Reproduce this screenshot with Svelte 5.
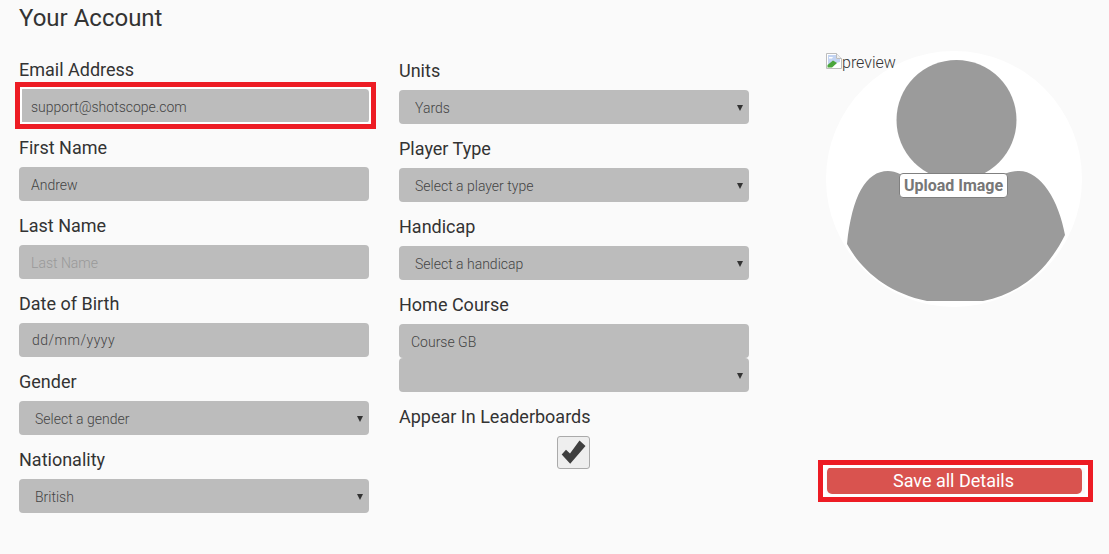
<script>
  const left = [
    { label: 'Email Address', kind: 'input', value: 'support@shotscope.com', marked: true },
    { label: 'First Name', kind: 'input', value: 'Andrew' },
    { label: 'Last Name', kind: 'input', placeholder: 'Last Name' },
    { label: 'Date of Birth', kind: 'input', value: 'dd/mm/yyyy', spaced: true },
    { label: 'Gender', kind: 'select', value: 'Select a gender' },
    { label: 'Nationality', kind: 'select', value: 'British' }
  ];
  const middle = [
    { label: 'Units', kind: 'select', value: 'Yards' },
    { label: 'Player Type', kind: 'select', value: 'Select a player type' },
    { label: 'Handicap', kind: 'select', value: 'Select a handicap' }
  ];
</script>

{#snippet field(f)}
  <div class="field">
    <span class="label">{f.label}</span>
    {#if f.kind === 'input'}
      <div class:marked={f.marked} class="control-wrap">
        <input class="control" class:spaced={f.spaced} type="text" value={f.value ?? ''} placeholder={f.placeholder ?? ''} />
      </div>
    {:else}
      <div class="select-wrap">
        <select class="control select"><option>{f.value}</option></select>
      </div>
    {/if}
  </div>
{/snippet}

<main class="page">
  <h1>Your Account</h1>
  <div class="columns">
    <section class="col">
      {#each left as f}{@render field(f)}{/each}
    </section>

    <section class="col col-mid">
      {#each middle as f}{@render field(f)}{/each}
      <div class="field">
        <span class="label">Home Course</span>
        <input class="control" type="text" value="Course GB" />
        <div class="select-wrap"><select class="control select"><option></option></select></div>
      </div>
      <div class="field check-field">
        <span class="label">Appear In Leaderboards</span>
        <div class="check-row">
          <span class="check">
            <svg viewBox="0 0 31 31" width="31" height="31" aria-hidden="true">
              <path d="M3.700 17.500 L8 12.700 L12 16.500 L21.500 3.500 L27.500 9 L12.200 26.800 Z" fill="#3f3f3f" />
            </svg>
          </span>
        </div>
      </div>
    </section>

    <aside class="col-side">
      <div class="avatar">
        <svg class="person" viewBox="0 0 256 256" width="256" height="256" aria-hidden="true">
          <circle cx="128" cy="128" r="128" fill="#fff" />
          <circle cx="130.500" cy="69" r="60" fill="#9b9b9b" />
          <path d="M74 123 C70 121 66 120 62 120 C40 120 26 145 21 193 C36 220 62 242 101 250 L157 250 C196 242 222 218 239 184 C233 150 215 120 193 120 C188 120 184 121 181 122 L128 135 Z" fill="#9b9b9b" />
        </svg>
        <span class="broken">
          <svg viewBox="0 0 16 16" width="16" height="16" aria-hidden="true">
            <path d="M0.5 0.5 H10.5 L15.5 5.500 V15.5 H0.5 Z" fill="#fff" stroke="#bdbdbd" />
            <path d="M10.5 0.5 V5.500 H15.5" fill="#eee" stroke="#bdbdbd" />
            <path d="M2 2 H10 V6 H14 V9 L2 12 Z" fill="#c3d4f2" />
            <path d="M1.500 14.500 V12 L7 7.500 L11 10 L6 14.500 Z" fill="#4aa63c" />
            <path d="M3 4 h4 l-1 1.500 h-3 Z" fill="#fff" />
          </svg>preview</span>
        <button class="upload" type="button">Upload Image</button>
      </div>
      <div class="save-wrap">
        <button class="save" type="button">Save all Details</button>
      </div>
    </aside>
  </div>
</main>

<style>
  :global(body) {
    margin: 0;
    background: #fafafa;
  }
  .page {
    height: 554px;
    box-sizing: border-box;
    padding-left: 19px;
    font-family: Roboto, "Liberation Sans", sans-serif;
    color: #333;
    overflow: hidden;
  }
  h1 {
    margin: 0 0 23px;
    font-size: 24px;
    font-weight: 400;
    line-height: 36px;
  }
  .columns {
    display: grid;
    grid-template-columns: 350px 350px 256px;
    column-gap: 30px;
  }
  .col-mid {
    margin-top: 1px;
  }
  .field {
    display: flex;
    flex-direction: column;
    margin-bottom: 14px;
  }
  .label {
    font-size: 18px;
    line-height: 20px;
    padding-top: 1px;
    margin-bottom: 9px;
  }
  .control-wrap,
  .select-wrap {
    position: relative;
    height: 34px;
  }
  .control {
    display: block;
    box-sizing: border-box;
    width: 350px;
    height: 34px;
    padding: 2px 12px 0;
    border: 0;
    border-radius: 4px;
    background: #bcbcbc;
    color: #444;
    font: 300 14px Roboto, "Liberation Sans", sans-serif;
    outline: none;
  }
  .spaced {
    padding: 0 12px 0 13px;
    letter-spacing: 0.5px;
  }
  .control::placeholder {
    color: #999;
    opacity: 1;
  }
  .select {
    appearance: none;
    padding: 2px 16px 0;
  }
  .select-wrap::after {
    content: "";
    position: absolute;
    right: 6px;
    top: 15px;
    border-left: 3px solid transparent;
    border-right: 3px solid transparent;
    border-top: 6px solid #333;
  }
  .marked::after {
    content: "";
    position: absolute;
    inset: -7px -7px -6px -4px;
    border: 5px solid #ed1c24;
    box-shadow: inset 0 0 0 2px #fff;
    pointer-events: none;
  }
  .check-field {
    margin-top: 14px;
  }
  .check-row {
    display: flex;
    justify-content: center;
    padding-right: 1px;
  }
  .check {
    display: flex;
    align-items: center;
    justify-content: center;
    box-sizing: border-box;
    width: 33px;
    height: 33px;
    border: 1px solid #aaa;
    border-radius: 3px;
    background: #eee;
  }
  .col-side {
    margin-left: 47px;
    margin-top: -8px;
    width: 256px;
  }
  .avatar {
    position: relative;
    width: 256px;
    height: 256px;
  }
  .person {
    display: block;
  }
  .broken {
    position: absolute;
    left: 0;
    top: 2px;
    display: flex;
    font-size: 16px;
    font-weight: 300;
    line-height: 20px;
    color: #333;
  }
  .upload {
    position: absolute;
    left: 73px;
    top: 122px;
    width: 109px;
    height: 25px;
    padding: 0;
    border: 1px solid #808080;
    border-radius: 4px;
    background: #fff;
    color: #777;
    font: 700 16px Roboto, "Liberation Sans", sans-serif;
  }
  .save-wrap {
    position: relative;
    margin-top: 160px;
    margin-left: 1px;
    width: 255px;
    height: 27px;
  }
  .save-wrap::after {
    content: "";
    position: absolute;
    inset: -7px -11px -8px -9px;
    border: 5px solid #ed1c24;
    box-shadow: inset 0 0 0 3px #fff;
    pointer-events: none;
  }
  .save {
    display: block;
    width: 100%;
    height: 100%;
    padding: 0 2px 0 0;
    border: 0;
    border-radius: 5px;
    background: #d9534f;
    color: #fff;
    font: 400 18px Roboto, "Liberation Sans", sans-serif;
  }
</style>
